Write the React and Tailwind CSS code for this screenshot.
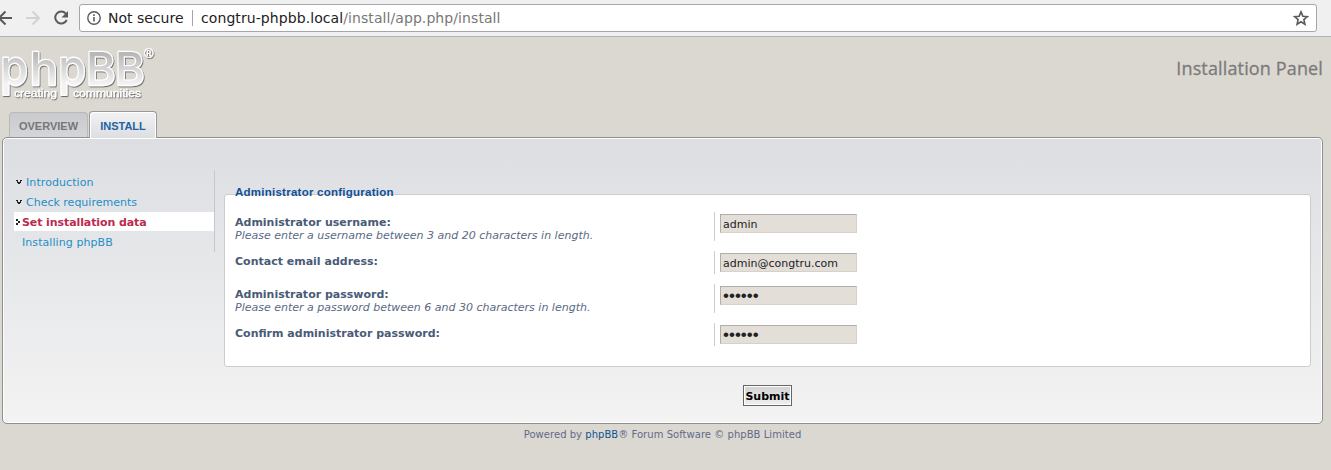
import React from "react";

const verdana = "font-['DejaVu_Sans',sans-serif]";
const arial = "font-['Liberation_Sans',sans-serif]";

function BrowserBar() {
  return (
    <div className={`flex h-[37px] items-start border-b border-[#b2b4b6] bg-[#f0f0f0] ${verdana}`}>
      <svg width="79" height="36" viewBox="0 0 79 36" fill="none" className="shrink-0">
        <path d="M12 18H-1M5.500 11.500L-1 18l6.500 6.500" stroke="#5a5a5a" strokeWidth="2" />
        <path d="M26 18h13M32.500 11.500L39 18l-6.500 6.500" stroke="#d2d2d2" strokeWidth="2" />
        <path d="M65.800 13.600A6 6 0 1 0 66.700 20" stroke="#5a5a5a" strokeWidth="2" />
        <path d="M68 11v6.500h-6.500z" fill="#5a5a5a" />
      </svg>
      <div className="mt-1 flex h-7 w-[1238px] items-center rounded-[3px] border border-[#a6a6a6] bg-white pl-[7px] pr-[7px] text-[14px]">
        <svg width="14" height="14" viewBox="0 0 14 14" fill="none">
          <circle cx="7" cy="7" r="6.200" stroke="#5a5a5a" strokeWidth="1.400" />
          <path d="M7 6v4.500M7 3.300v1.600" stroke="#5a5a5a" strokeWidth="1.600" />
        </svg>
        <span className="ml-[7px] w-[84px] whitespace-nowrap text-[#222]">Not secure</span>
        <span className="h-4 w-px bg-[#a6a6a6]" />
        <span className="ml-2 whitespace-nowrap tracking-[0.08px] text-[#222]">
          congtru-phpbb.local<span className="text-[#777]">/install/app.php/install</span>
        </span>
        <svg width="16" height="16" viewBox="0 0 15 15" className="ml-auto" fill="none">
          <path d="M7.500 1.800l1.700 4 4.300.4-3.300 2.800 1 4.300-3.700-2.300-3.700 2.300 1-4.300L1.500 6.200l4.300-.4z" stroke="#5a5a5a" strokeWidth="1.500" />
        </svg>
      </div>
    </div>
  );
}

const glyphs = [
  ["p", "translate(.2 84.500) scale(.83 .93)"],
  ["h", "translate(29.700 84.500) scale(.87 .84)"],
  ["p", "translate(58.200 84.500) scale(.83 .93)"],
  ["B", "translate(86 84.500) scale(.84 .83)"],
  ["B", "translate(115 84.500) scale(.84 .83)"],
];

function Logo() {
  return (
    <svg width="160" height="66" viewBox="0 40 160 66" className="shrink-0">
      <defs>
        <linearGradient id="metal" x1="0" y1="0" x2="0" y2="1">
          <stop offset="0.250" stopColor="#b8b8b8" />
          <stop offset="0.800" stopColor="#f4f4f4" />
        </linearGradient>
        <filter id="shade" x="-10%" y="-10%" width="120%" height="130%">
          <feDropShadow dx="0.800" dy="1.100" stdDeviation="0.600" floodColor="#555" floodOpacity="0.800" />
        </filter>
      </defs>
      <g filter="url(#shade)" fontFamily="Inter, sans-serif" fontWeight="500" fontSize="54" strokeLinejoin="round" fill="url(#metal)" stroke="#fff" strokeWidth="3" paintOrder="stroke">
        {glyphs.map(([g, t], i) => (
          <text key={i} transform={t}>{g}</text>
        ))}
      </g>
      <g filter="url(#shade)" fontFamily="Liberation Sans, sans-serif" fontSize="10.500" fill="#fff" stroke="#fff" strokeWidth=".3">
        <text x="14" y="97" textLength="43" lengthAdjust="spacingAndGlyphs">creating</text>
        <text x="73" y="97" textLength="68" lengthAdjust="spacingAndGlyphs">communities</text>
        <text x="144" y="58" fontSize="13">®</text>
      </g>
    </svg>
  );
}

function Arrow({ down }) {
  return (
    <svg width="6" height="6" viewBox="0 0 6 6" fill="#222" shapeRendering="crispEdges" className="shrink-0">
      {down ? <path d="M0 1h2v1H0zM4 1h2v1H4zM1 2h1v1h2V2h1v2H4v1H2V4H1z" /> : <path d="M0 0h2v2H0zM2 2h2v2H2zM0 4h2v2H0z" />}
    </svg>
  );
}

function Row({ label, hint, value, password, className }) {
  return (
    <div className={`flex ${className}`}>
      <div className="w-[479px] pt-1 text-[11px] leading-[13px] text-[#4a5b76]">
        <div className="font-bold">{label}</div>
        {hint && <div className="italic text-[#5a6986]">{hint}</div>}
      </div>
      <div className="border-l border-[#ccc] pl-[5px] pt-[2px]">
        <input
          type={password ? "password" : "text"}
          defaultValue={value}
          className={`block h-[19px] w-[137px] border border-[#d5d3c6] border-l-[#afaeaa] border-t-[#afaeaa] bg-[#e3ded8] px-[2px] text-[#222] outline-none ${password ? "pt-px font-['Liberation_Sans',sans-serif] text-[17px]" : "pt-[2px] text-[11px]"}`}
        />
      </div>
    </div>
  );
}

export default function App() {
  return (
    <div className={`h-[470px] w-[1331px] overflow-hidden bg-[#dbd8d1] ${verdana}`}>
      <BrowserBar />
      <div className="flex h-[74px] justify-between pr-2 pt-[3px]">
        <Logo />
        <h1 className="mt-[14px] whitespace-nowrap font-['Open_Sans',sans-serif] text-[18px] font-medium leading-[28px] tracking-[0.14px] text-[#7b7b7b] [-webkit-text-stroke:0.3px_#7b7b7b]">Installation Panel</h1>
      </div>
      <div className={`relative z-10 -mb-px flex h-[27px] items-end pl-[9px] text-[11px] font-bold ${arial}`}>
        <div className="mb-px flex h-[25px] w-[79px] items-center justify-center rounded-t-[4px] border border-b-0 border-[#b9b9b9] bg-linear-to-b from-[#c9cacd] to-[#d5d6da] pt-[2px] text-[#767676]">OVERVIEW</div>
        <div className="ml-px flex h-[27px] w-[68px] items-center justify-center rounded-t-[4px] border border-b-0 border-[#999] bg-linear-to-b from-[#f2f2f3] to-[#dcdee2] pt-[3px] text-[#23649f] shadow-[inset_1px_1px_0_#fff,inset_-1px_0_0_#fff]">INSTALL</div>
      </div>
      <div className="ml-[2px] flex h-[287px] w-[1321px] rounded-[5px] border border-[#8f8f8f] bg-linear-to-b from-[#dcdee2] to-[#f3f3f3] shadow-[inset_0_0_0_1px_#fff]">
        <nav className="ml-[11px] mt-[32px] flex h-[82px] w-[201px] flex-col border-r border-[#c5c7cc] pt-[2px] text-[11px] text-[#1f8fc6]">
          <div className="flex h-5 items-center gap-1 pl-[2px]"><Arrow down /><span className="pt-[2px] tracking-[0.08px]">Introduction</span></div>
          <div className="flex h-5 items-center gap-1 pl-[2px]"><Arrow down /><span className="pt-[2px]">Check requirements</span></div>
          <div className="flex h-[19px] items-center bg-white pl-[2px] font-bold text-[#bc2a4d]"><Arrow /><span className="pt-[3px] tracking-[-0.09px]">Set installation data</span></div>
          <div className="mt-px flex h-5 items-center pl-2 pt-[2px] tracking-[0.07px]">Installing phpBB</div>
        </nav>
        <main className="ml-[9px] mt-[46px] w-[1087px]">
          <fieldset className="h-[183px]">
            <div className="mt-[10px] h-[173px] rounded-[3px] border border-[#ccc] bg-white px-[10px]">
              <div className={`-mt-[10px] h-[14px] w-[160px] bg-linear-to-b from-transparent from-70% to-white to-70% text-[11.500px] font-bold leading-[14px] tracking-[0.25px] text-[#115098] ${arial}`}>Administrator configuration</div>
              <Row className="mt-[13px] h-[29px]" label="Administrator username:" hint="Please enter a username between 3 and 20 characters in length." value="admin" />
              <Row className="mt-[10px] h-[23px]" label="Contact email address:" value="admin@congtru.com" />
              <Row className="mt-[10px] h-[29px]" label="Administrator password:" hint="Please enter a password between 6 and 30 characters in length." value="secret" password />
              <Row className="mt-[10px] h-[23px]" label="Confirm administrator password:" value="secret" password />
            </div>
          </fieldset>
          <div className="mt-[18px] flex justify-center">
            <button className="h-[21px] w-[49px] border border-[#666] bg-linear-to-b from-[#d2d2d2] to-[#efefef] pt-[2px] text-[11px] font-bold leading-[17px] text-black shadow-[inset_0_0_0_1px_#fff]">Submit</button>
          </div>
        </main>
      </div>
      <footer className="w-[1325px] pt-1 text-center text-[10px] leading-[14px] tracking-[0.04px] text-[#626a8a]">
        Powered by <a className="text-[#10548f]">phpBB</a>® Forum Software © phpBB Limited
      </footer>
    </div>
  );
}
